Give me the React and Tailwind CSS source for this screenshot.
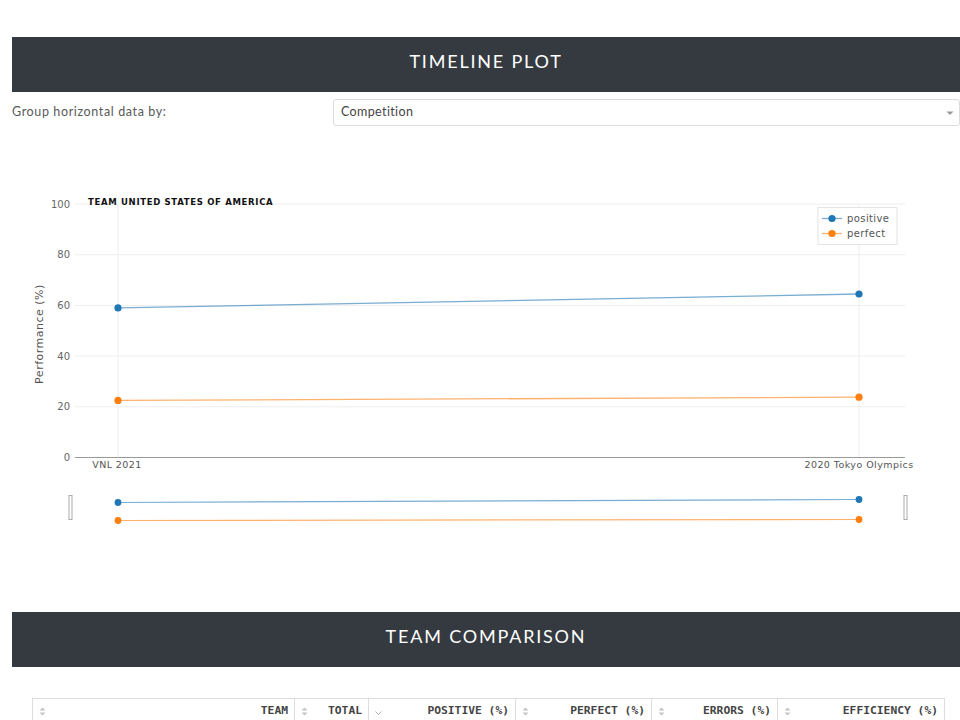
import React from "react";

const BLUE = "#1f77b4";
const ORANGE = "#ff7f0e";

// page coords: 0 at y=457.5, 100 at y=204
const yOf = (v) => 457.5 - v * 2.535;

const SortIcon = ({ active }) =>
  active ? (
    <svg width="9" height="10" viewBox="0 0 9 10" className="shrink-0">
      <path d="M1.5 5.5 L4.5 8.5 L7.5 5.5" fill="none" stroke="#b0b0b0" strokeWidth="1" />
    </svg>
  ) : (
    <svg width="9" height="11" viewBox="0 0 9 11" className="shrink-0">
      <path d="M1.5 4.5 L4.5 1.5 L7.5 4.5 Z" fill="#c4c4c4" />
      <path d="M1.5 6.5 L4.5 9.5 L7.5 6.5 Z" fill="#c4c4c4" />
    </svg>
  );

const columns = [
  { label: "TEAM", w: "w-[261px]" },
  { label: "TOTAL", w: "w-[74px]" },
  { label: "POSITIVE (%)", w: "w-[147px]", active: true },
  { label: "PERFECT (%)", w: "w-[136px]" },
  { label: "ERRORS (%)", w: "w-[126px]" },
  { label: "EFFICIENCY (%)", w: "w-[167px]" },
];

const SectionHeader = ({ title }) => (
  <div className="h-[55px] bg-[#343a40] flex items-center justify-center pb-[6px]">
    <h2
      className="text-white text-[18px] tracking-[0.1em] font-normal"
      style={{ fontFamily: "Lato, 'Open Sans', sans-serif" }}
    >
      {title}
    </h2>
  </div>
);

const TimelineChart = () => {
  const ticks = [0, 20, 40, 60, 80, 100];
  const x1 = 118;
  const x2 = 859;
  const pos = [59, 64.5];
  const per = [22.5, 23.8];
  return (
    <svg
      width="948"
      height="486"
      viewBox="12 126 948 486"
      className="block"
      style={{ fontFamily: "'DejaVu Sans', Verdana, sans-serif" }}
    >
      {/* grid */}
      {ticks.slice(1).map((t) => (
        <line key={t} x1="75" x2="905" y1={yOf(t)} y2={yOf(t)} stroke="#eeeeee" strokeWidth="1" />
      ))}
      <line x1={x1} x2={x1} y1="204" y2="457" stroke="#eeeeee" />
      <line x1={x2} x2={x2} y1="204" y2="457" stroke="#eeeeee" />
      <line x1="75" x2="905" y1="457.5" y2="457.5" stroke="#999999" strokeWidth="1.2" />

      {/* y ticks */}
      {ticks.map((t) => (
        <text key={t} x="70" y={yOf(t) + 3.5} textAnchor="end" fontSize="10" fill="#666">
          {t}
        </text>
      ))}
      <text
        x="0"
        y="0"
        transform="translate(43 334) rotate(-90)"
        textAnchor="middle"
        fontSize="11"
        fill="#555"
        letterSpacing="0.5"
      >
        Performance (%)
      </text>

      {/* x ticks */}
      <text x={x1 - 1} y="467.5" textAnchor="middle" fontSize="9.5" fill="#555" letterSpacing="0.4">
        VNL 2021
      </text>
      <text x={x2} y="467.5" textAnchor="middle" fontSize="9.5" fill="#555" letterSpacing="0.45">
        2020 Tokyo Olympics
      </text>

      {/* title */}
      <text x="88" y="204.5" fontSize="8.5" fontWeight="bold" fill="#111" letterSpacing="0.68">
        TEAM UNITED STATES OF AMERICA
      </text>

      {/* traces */}
      <line x1={x1} y1={yOf(pos[0])} x2={x2} y2={yOf(pos[1])} stroke={BLUE} strokeOpacity="0.6" strokeWidth="1.3" />
      <line x1={x1} y1={yOf(per[0])} x2={x2} y2={yOf(per[1])} stroke={ORANGE} strokeOpacity="0.6" strokeWidth="1.3" />
      <circle cx={x1} cy={yOf(pos[0])} r="3.6" fill={BLUE} />
      <circle cx={x2} cy={yOf(pos[1])} r="3.6" fill={BLUE} />
      <circle cx={x1} cy={yOf(per[0])} r="3.6" fill={ORANGE} />
      <circle cx={x2} cy={yOf(per[1])} r="3.6" fill={ORANGE} />

      {/* legend */}
      <rect x="818" y="207.5" width="79" height="37" fill="#fff" stroke="#e4e4e4" />
      <line x1="822" x2="842" y1="218.5" y2="218.5" stroke={BLUE} strokeOpacity="0.6" strokeWidth="1.3" />
      <circle cx="832" cy="218.5" r="3.6" fill={BLUE} />
      <text x="847" y="222" fontSize="10" fill="#555" letterSpacing="0.4">positive</text>
      <line x1="822" x2="842" y1="233.5" y2="233.5" stroke={ORANGE} strokeOpacity="0.6" strokeWidth="1.3" />
      <circle cx="832" cy="233.5" r="3.6" fill={ORANGE} />
      <text x="847" y="237" fontSize="10" fill="#555" letterSpacing="0.4">perfect</text>

      {/* range slider */}
      <rect x="69" y="495.5" width="3" height="24" fill="#fff" stroke="#aaa" />
      <rect x="904" y="495.5" width="3" height="24" fill="#fff" stroke="#aaa" />
      <line x1={x1} y1="502.5" x2={x2} y2="499.5" stroke={BLUE} strokeOpacity="0.6" strokeWidth="1.2" />
      <line x1={x1} y1="520.5" x2={x2} y2="519.5" stroke={ORANGE} strokeOpacity="0.6" strokeWidth="1.2" />
      <circle cx={x1} cy="502.5" r="3.4" fill={BLUE} />
      <circle cx={x2} cy="499.5" r="3.4" fill={BLUE} />
      <circle cx={x1} cy="520.5" r="3.4" fill={ORANGE} />
      <circle cx={x2} cy="519.5" r="3.4" fill={ORANGE} />
    </svg>
  );
};

const App = () => {
  return (
    <div className="w-full overflow-hidden bg-white pl-3 pt-[37px] h-[720px]">
      <SectionHeader title="TIMELINE PLOT" />

      <div className="flex items-center mt-[7px] h-[27px]" style={{ fontFamily: "Lato, 'Open Sans', sans-serif" }}>
        <div className="w-[321px] text-[12.5px] text-[#5a5a5a] tracking-[0.05em]">Group horizontal data by:</div>
        <div className="flex-1 h-[27px] border border-[#dcdcdc] rounded-[3px] flex items-center justify-between pl-[7px] pr-[5px]">
          <span className="text-[12.5px] text-[#444] tracking-[0.03em]">Competition</span>
          <svg width="8" height="6" viewBox="0 0 8 6">
            <path d="M0.5 1.5 L4 5 L7.5 1.5 Z" fill="#999" />
          </svg>
        </div>
      </div>

      <TimelineChart />

      <SectionHeader title="TEAM COMPARISON" />

      <div className="mt-[31px] ml-5 flex border border-[#dddddd] w-fit">
        {columns.map((c, i) => (
          <div
            key={c.label}
            className={`${c.w} h-[24px] flex items-center justify-between pl-[5px] pr-[6px] ${i > 0 ? "border-l border-[#dddddd]" : ""}`}
          >
            <SortIcon active={c.active} />
            <span
              className="text-[11.3px] font-bold text-[#444]"
              style={{ fontFamily: "'DejaVu Sans Mono', 'Liberation Mono', monospace" }}
            >
              {c.label}
            </span>
          </div>
        ))}
      </div>
    </div>
  );
};

export default App;
